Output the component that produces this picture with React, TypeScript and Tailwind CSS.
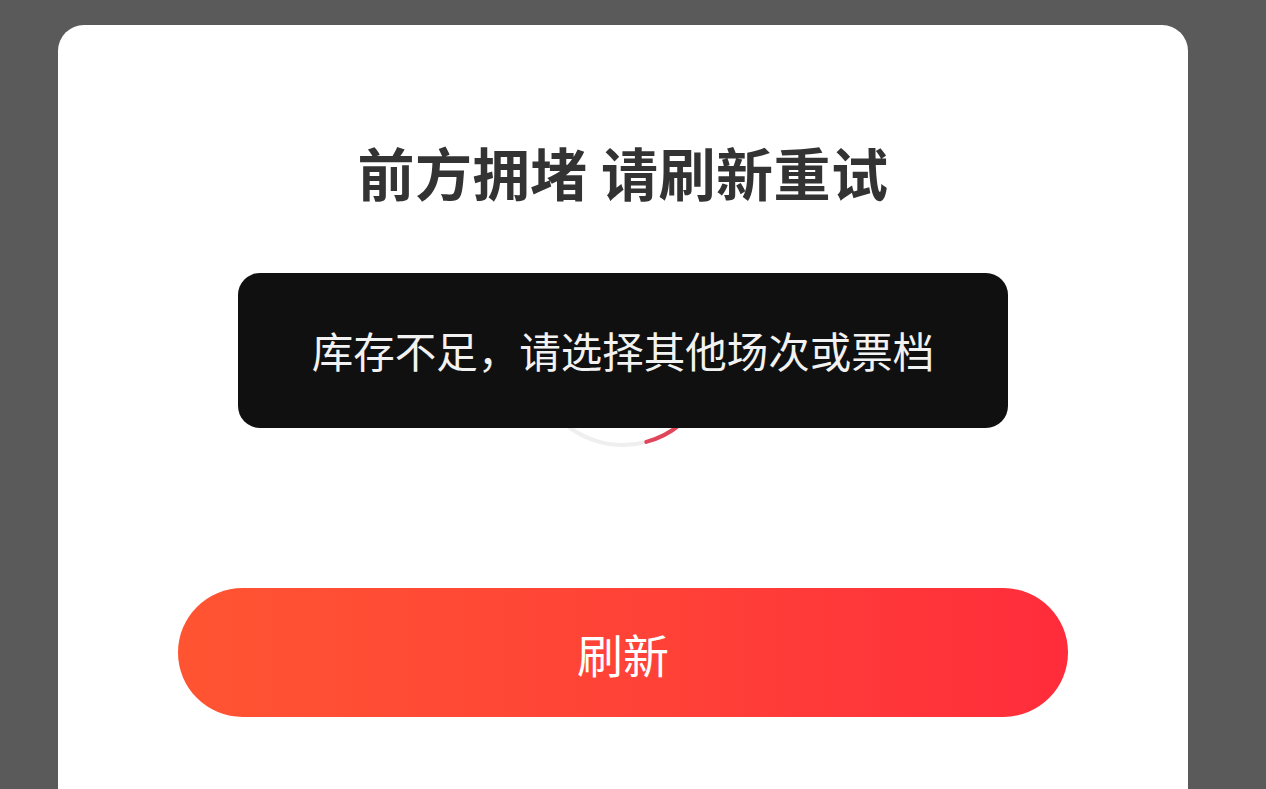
export default function App() {
  return (
    <div
      className="w-[1266px] h-[789px] overflow-hidden bg-[#5a5a5a] pt-[25px] pl-[58px]"
      style={{ fontFamily: '"Noto Sans CJK SC", "Noto Sans", sans-serif' }}
    >
      <div className="relative w-[1130px] h-[820px] bg-white rounded-[26px] flex flex-col items-center pt-[118px]">
        <h1 className="text-[57px] leading-[57px] font-bold text-[#333333] tracking-[0.5px]">
          前方拥堵 请刷新重试
        </h1>

        {/* loading spinner, mostly hidden under the toast */}
        <svg
          className="mt-[55px]"
          width="200"
          height="200"
          viewBox="0 0 200 200"
        >
          <path
            d="M 31.1 157.9 A 90 90 0 0 0 123.3 186.9"
            fill="none"
            stroke="#efefef"
            strokeWidth="4"
            strokeLinecap="round"
          />
          <path
            d="M 123.3 186.9 A 90 90 0 0 0 157.9 168.9"
            fill="none"
            stroke="#e0465a"
            strokeWidth="4"
            strokeLinecap="round"
          />
        </svg>

        <button className="mt-[133px] w-[890px] h-[129px] rounded-full bg-gradient-to-r from-[#ff5432] to-[#ff2c3b] text-white text-[46px] leading-none">
          刷新
        </button>

        <div className="absolute left-[180px] top-[248px] w-[770px] h-[155px] rounded-[22px] bg-[#101010] flex items-center justify-center">
          <span className="text-[41.5px] leading-none text-[#f2f2f2]">
            库存不足，请选择其他场次或票档
          </span>
        </div>
      </div>
    </div>
  );
}
